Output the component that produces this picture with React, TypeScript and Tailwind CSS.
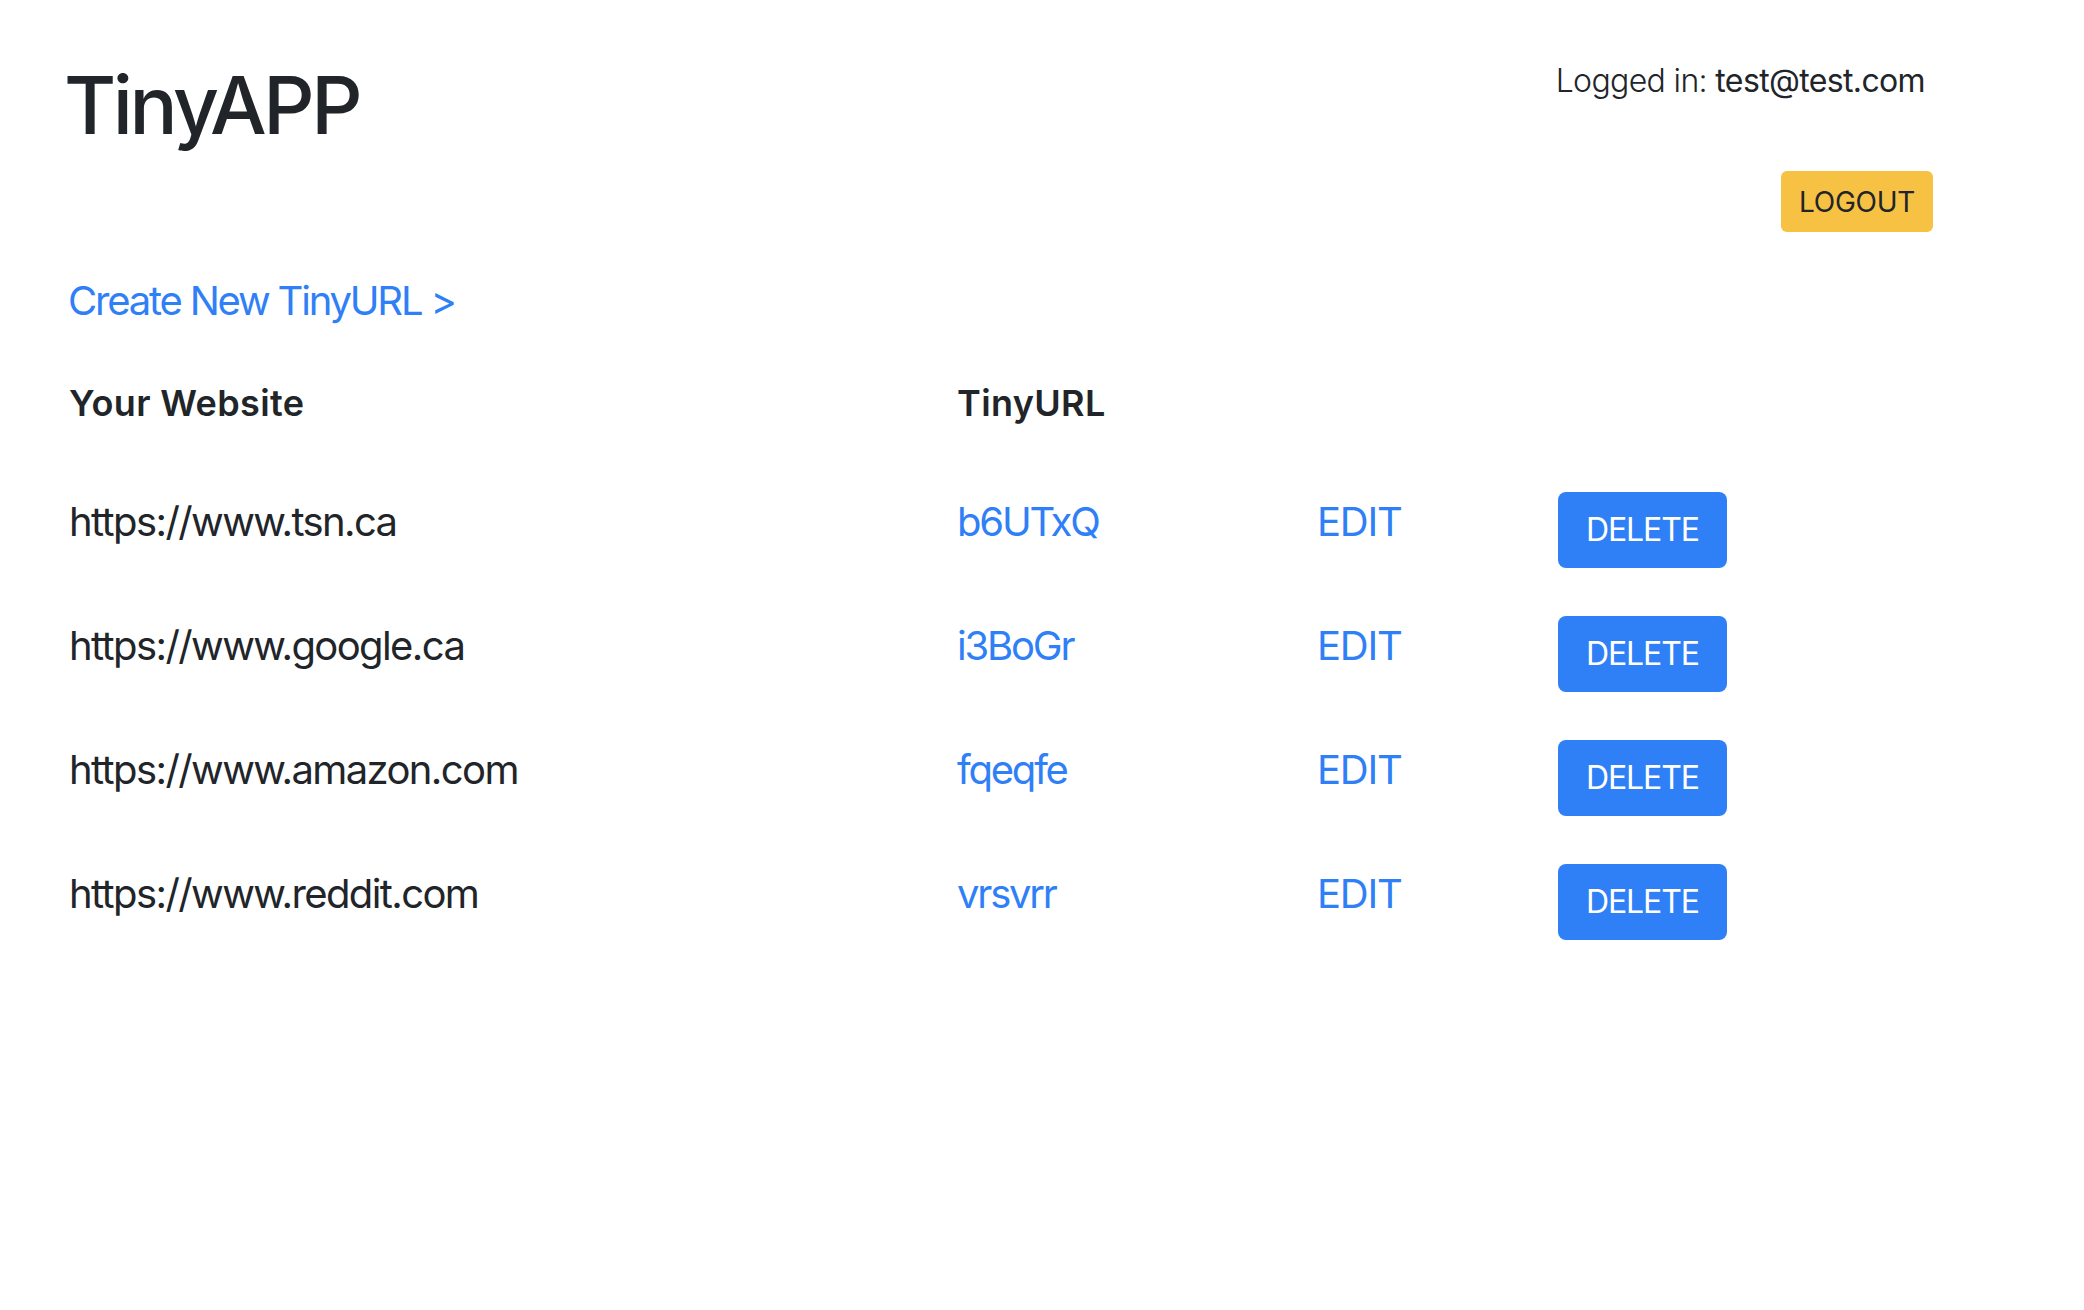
import React from 'react';

const urls = [
  { long: 'https://www.tsn.ca', short: 'b6UTxQ' },
  { long: 'https://www.google.ca', short: 'i3BoGr' },
  { long: 'https://www.amazon.com', short: 'fqeqfe' },
  { long: 'https://www.reddit.com', short: 'vrsvrr' },
];

const cols = 'grid grid-cols-[889px_360px_241px_1fr]';

export default function App() {
  return (
    <div className="min-h-screen bg-white text-[#212529] font-['Inter',sans-serif] pl-[44px] pr-[151px] pt-[57px]">
      {/* header */}
      <div className="flex justify-between items-start">
        <h1 className="pl-[20px] text-[80px] leading-[96px] font-medium tracking-[-0.043em]">TinyAPP</h1>
        <div className="flex flex-col items-end">
          <p className="mr-[8px] text-[32px] leading-[48px] tracking-[-0.02em]">
            <span className="font-light">Logged in: </span>
            <span>test@test.com</span>
          </p>
          <button className="mt-[66px] h-[61px] px-[18px] rounded-[6px] bg-[#f7c244] text-[28px] leading-[42px] text-[#212529] tracking-[-0.01em]">
            LOGOUT
          </button>
        </div>
      </div>

      <a href="#" className="block mt-[45px] pl-[24px] text-[40px] leading-[48px] text-[#2f80f7] tracking-[-0.055em]">
        Create New TinyURL &gt;
      </a>

      {/* table */}
      <div className="mt-[27px]">
        <div className={`${cols} text-[36px] leading-[54px] font-semibold tracking-[0.01em]`}>
          <div className="pl-[25px] py-[24px]">Your Website</div>
          <div className="p-[24px]">TinyURL</div>
          <div className="p-[24px]"></div>
          <div className="p-[24px]"></div>
        </div>
        <div className="mt-[14px]">
          {urls.map((u) => (
            <div key={u.short} className={`${cols} items-start text-[40px] leading-[60px] tracking-[-0.04em]`}>
              <div className="pl-[25px] py-[24px]">{u.long}</div>
              <div className="p-[24px]">
                <a href="#" className="text-[#2f80f7] tracking-[-0.055em]">{u.short}</a>
              </div>
              <div className="p-[24px]">
                <a href="#" className="text-[#2f80f7] tracking-[-0.03em]">EDIT</a>
              </div>
              <div className="p-[24px]">
                <button className="px-[28px] py-[14px] rounded-[8px] bg-[#2f80f7] text-white text-[32px] leading-[48px] tracking-[-0.035em]">
                  DELETE
                </button>
              </div>
            </div>
          ))}
        </div>
      </div>
    </div>
  );
}
